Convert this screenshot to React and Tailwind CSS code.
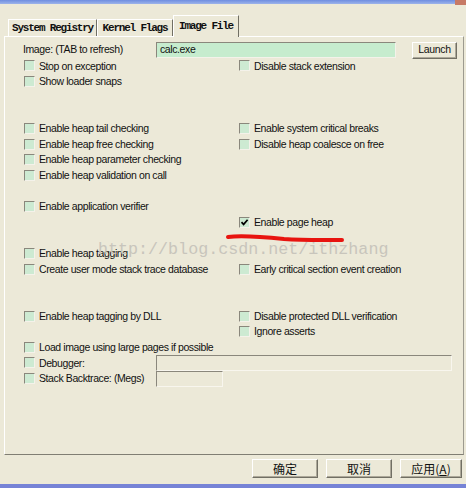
import React from "react";

const ui = { fontFamily: '"Liberation Sans", Arial, sans-serif' };
const mono = { fontFamily: '"Liberation Mono", "Courier New", monospace' };
const cjk = { fontFamily: '"Noto Sans CJK SC", "Liberation Sans", sans-serif' };

function Box({ checked }) {
  return (
    <span className="relative inline-block h-[11px] w-[11px] shrink-0 border border-t-[#8a877c] border-l-[#8a877c] border-b-[#f4f2ea] border-r-[#f4f2ea] bg-[#cdead2]">
      {checked ? (
        <svg viewBox="0 0 9 9" className="absolute left-0 top-0 h-[9px] w-[9px]">
          <path d="M1.5 4.2 L3.6 6.4 L7.6 1.8" fill="none" stroke="#000" strokeWidth="1.7" />
        </svg>
      ) : null}
    </span>
  );
}

function Check({ label, checked }) {
  if (!label) return <div />;
  return (
    <div className="flex items-center gap-[4px] pl-[1px]">
      <Box checked={checked} />
      <span className="whitespace-nowrap text-[10.5px] leading-none tracking-[-0.4px] text-[#111]">{label}</span>
    </div>
  );
}

const rows = [
  ["Stop on exception", "Disable stack extension"],
  ["Show loader snaps", ""],
  ["", ""],
  ["", ""],
  ["Enable heap tail checking", "Enable system critical breaks"],
  ["Enable heap free checking", "Disable heap coalesce on free"],
  ["Enable heap parameter checking", ""],
  ["Enable heap validation on call", ""],
  ["", ""],
  ["Enable application verifier", ""],
  ["", "Enable page heap"],
  ["", ""],
  ["Enable heap tagging", ""],
  ["Create user mode stack trace database", "Early critical section event creation"],
  ["", ""],
  ["", ""],
  ["Enable heap tagging by DLL", "Disable protected DLL verification"],
  ["", "Ignore asserts"],
  ["Load image using large pages if possible", ""],
];

function Tab({ label, active, w }) {
  if (active) {
    return (
      <div
        style={{ width: w }}
        className="relative z-10 -mb-[1px] flex h-[22px] items-center justify-center border-l border-t border-r border-l-white border-t-white border-r-[#716f64] bg-[#ece9d8] text-[11px] font-bold tracking-[-1.2px] text-[#111]"
      >
        <span style={mono}>{label}</span>
      </div>
    );
  }
  return (
    <div
      style={{ width: w }}
      className="flex h-[17px] items-center justify-center border-l border-t border-r border-l-white border-t-white border-r-[#716f64] text-[11px] font-bold tracking-[-1.2px] text-[#111]"
    >
      <span style={mono}>{label}</span>
    </div>
  );
}

function RaisedBtn({ children, w, className = "" }) {
  return (
    <div
      style={{ width: w }}
      className={"flex items-center justify-center border border-t-white border-l-white border-b-[#716f64] border-r-[#716f64] bg-[#ece9d8] shadow-[inset_-1px_-1px_0_#aca899] " + className}
    >
      {children}
    </div>
  );
}

export default function App() {
  return (
    <div style={ui} className="relative flex h-[488px] w-[466px] flex-col overflow-hidden bg-[#ece9d8]">
      <div className="relative h-[4px] bg-gradient-to-b from-[#6f8ee0] to-[#9db3ea]">
        <div className="absolute right-0 top-0 h-[5px] w-[11px] bg-[#c77a66]" />
      </div>

      <div className="flex h-[32px] items-end pl-[8px]">
        <Tab label="System Registry" w={89} />
        <Tab label="Kernel Flags" w={76} />
        <Tab label="Image File" w={66} active />
      </div>

      <div className="ml-[4px] mr-[2px] h-[419px] border border-t-white border-l-white border-b-[#807e73] border-r-[#9c9a8f]">
        <div className="mt-[5px] flex h-[16px] items-center pl-[18px]">
          <span className="w-[133px] whitespace-nowrap text-[10.5px] tracking-[-0.4px] text-[#111]">Image: (TAB to refresh)</span>
          <div className="flex h-[16px] w-[240px] items-center border border-t-[#8a877c] border-l-[#8a877c] border-b-[#f4f2ea] border-r-[#f4f2ea] bg-[#c6ecce] pl-[3px] text-[10.5px] tracking-[-0.4px] text-[#111]">
            calc.exe
          </div>
          <RaisedBtn w={45} className="ml-[16px] h-[17px] text-[10.5px] tracking-[-0.3px] text-[#111]">Launch</RaisedBtn>
        </div>

        <div className="grid grid-cols-[215px_1fr] pl-[18px]">
          {rows.map(([l, r], i) => (
            <React.Fragment key={i}>
              <div className="flex h-[15.65px] items-center">
                <Check label={l} />
              </div>
              <div className="flex h-[15.65px] items-center">
                <Check label={r} checked={r === "Enable page heap"} />
              </div>
            </React.Fragment>
          ))}
        </div>

        <div className="flex h-[15.65px] items-center pl-[18px]">
          <div className="w-[133px]">
            <Check label="Debugger:" />
          </div>
          <div className="h-[16px] w-[296px] border border-t-[#8a877c] border-l-[#8a877c] border-b-[#f8f6ee] border-r-[#f8f6ee]" />
        </div>
        <div className="flex h-[15.65px] items-center pl-[18px]">
          <div className="w-[133px]">
            <Check label="Stack Backtrace: (Megs)" />
          </div>
          <div className="h-[16px] w-[67px] border border-t-[#8a877c] border-l-[#8a877c] border-b-[#f8f6ee] border-r-[#f8f6ee]" />
        </div>
      </div>

      <div className="mt-[4px] flex h-[19px] justify-end gap-[8px] pr-[4px]" style={cjk}>
        <RaisedBtn w={66} className="text-[12px] text-[#111]">确定</RaisedBtn>
        <RaisedBtn w={66} className="text-[12px] text-[#111]">取消</RaisedBtn>
        <RaisedBtn w={62} className="text-[12px] text-[#111]">
          应用(<span className="underline">A</span>)
        </RaisedBtn>
      </div>

      <div className="mt-auto h-[4px] bg-[#7683d6]" />

      <div
        style={mono}
        className="pointer-events-none absolute left-[98px] top-[242px] whitespace-nowrap text-[16.7px] leading-none text-[#c8c5bc]"
      >
        http://blog.csdn.net/ithzhang
      </div>

      <svg className="pointer-events-none absolute left-[224px] top-[232px]" width="124" height="14" viewBox="0 0 124 14">
        <path d="M4 5 C 20 3, 40 5, 60 7 C 80 8.5, 100 8, 118 8" fill="none" stroke="#e8140f" strokeWidth="4" strokeLinecap="round" />
      </svg>
    </div>
  );
}
